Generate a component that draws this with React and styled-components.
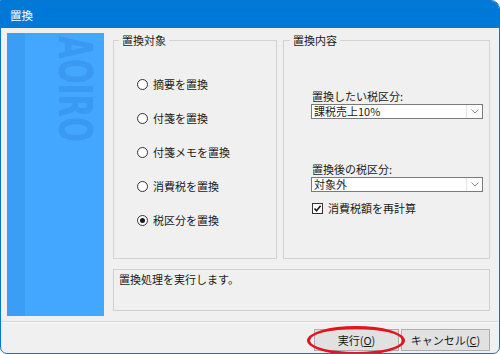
import React from 'react'
import styled, { createGlobalStyle } from 'styled-components'

const GlobalStyle = createGlobalStyle`
  html, body {
    margin: 0;
    padding: 0;
    background: #ffffff;
  }
  body {
    font-family: "Noto Sans CJK JP", "Noto Sans", sans-serif;
    font-size: 11px;
    color: #1a1a1a;
  }
`

const Window = styled.div`
  box-sizing: border-box;
  width: 500px;
  height: 354px;
  display: flex;
  flex-direction: column;
  background: #f0f0f0;
  border: 1px solid #0a76d4;
  border-radius: 0 9px 7px 7px;
  overflow: hidden;
`

const TitleBar = styled.div`
  height: 27px;
  flex: none;
  display: flex;
  align-items: center;
  padding-left: 9px;
  background: #0078d7;
  color: #ffffff;
  font-size: 11.5px;
`

const Main = styled.div`
  display: flex;
  padding: 5px 9px 0 6px;
  height: 283px;
`

const SidePanel = styled.div`
  width: 97px;
  flex: none;
  overflow: hidden;
  background: linear-gradient(to right, #3c9df7 0, #3c9df7 18px, #44a7ff 18px);
`

const Logo = styled.svg`
  display: block;
`

const Content = styled.div`
  flex: 1;
  margin-left: 9px;
  display: flex;
  flex-direction: column;
`

const Groups = styled.div`
  display: flex;
  gap: 6px;
  height: 226px;
`

const GroupBox = styled.fieldset`
  box-sizing: border-box;
  margin: 0;
  width: ${(props) => props.width || 'auto'};
  flex: ${(props) => (props.width ? 'none' : '1')};
  padding: ${(props) => props.pad};
  border: 1px solid #d3d3d3;
  display: flex;
  flex-direction: column;
`

const Legend = styled.legend`
  padding: 0 3px;
  margin-left: ${(props) => props.shift};
  line-height: 14px;
  font-size: 11px;
`

const RadioList = styled.div`
  display: flex;
  flex-direction: column;
  gap: 20px;
`

const RadioRow = styled.label`
  display: flex;
  align-items: center;
  height: 14px;
  line-height: 14px;
  gap: 5px;
`

const RadioCircle = styled.span`
  box-sizing: border-box;
  width: 11px;
  height: 11px;
  border-radius: 50%;
  border: 1px solid #333333;
  background: #ffffff;
  display: flex;
  align-items: center;
  justify-content: center;
  &::after {
    content: '';
    width: 5px;
    height: 5px;
    border-radius: 50%;
    background: ${(props) => (props.checked ? '#1a1a1a' : 'transparent')};
  }
`

const FieldLabel = styled.div`
  line-height: 14px;
  margin-top: ${(props) => props.top || '0'};
  margin-bottom: 1px;
`

const Select = styled.div`
  box-sizing: border-box;
  height: 15px;
  margin-left: -1px;
  display: flex;
  align-items: stretch;
  border: 1px solid #7a7a7a;
  background: #ffffff;
`

const SelectValue = styled.div`
  flex: 1;
  padding-left: 2px;
  line-height: 13px;
  white-space: nowrap;
`

const SelectArrow = styled.div`
  width: 15px;
  display: flex;
  align-items: center;
  justify-content: center;
  border-left: 1px solid #e3e3e3;
`

const CheckRow = styled.label`
  display: flex;
  align-items: center;
  gap: 5px;
  height: 14px;
  line-height: 14px;
  margin-top: 9px;
`

const CheckBox = styled.span`
  box-sizing: border-box;
  width: 11px;
  height: 11px;
  border: 1px solid #333333;
  background: #ffffff;
  display: flex;
  align-items: center;
  justify-content: center;
`

const MessageBox = styled.div`
  box-sizing: border-box;
  margin-top: 10px;
  height: 42px;
  padding: 2px 5px;
  line-height: 14px;
  border: 1px solid #cfcfcf;
`

const Separator = styled.div`
  margin-top: 5px;
  height: 1px;
  background: #d6d6d6;
  border-bottom: 1px solid #fafafa;
`

const Footer = styled.div`
  display: flex;
  justify-content: flex-end;
  gap: 2px;
  padding: 6px 9px 0 0;
`

const ButtonSlot = styled.div`
  position: relative;
`

const Button = styled.button`
  box-sizing: border-box;
  width: ${(props) => props.width};
  height: 22px;
  padding: 0;
  font-family: inherit;
  font-size: 11px;
  color: #1a1a1a;
  background: #e1e1e1;
  border: 1px solid #adadad;
  u {
    text-decoration: underline;
  }
`

const Highlight = styled.span`
  position: absolute;
  left: -7px;
  top: -3px;
  width: 98px;
  height: 29px;
  box-sizing: border-box;
  border: 3px solid #e3141b;
  border-radius: 50%;
  pointer-events: none;
`

const targets = ['摘要を置換', '付箋を置換', '付箋メモを置換', '消費税を置換', '税区分を置換']

const Chevron = () => (
  <svg width="8" height="5" viewBox="0 0 8 5">
    <path d="M0.5 0.5 L4 4 L7.5 0.5" fill="none" stroke="#8a8a8a" strokeWidth="1" />
  </svg>
)

const App = () => (
  <>
    <GlobalStyle />
    <Window>
      <TitleBar>置換</TitleBar>
      <Main>
        <SidePanel>
          <Logo width="97" height="283" viewBox="0 0 97 283">
            <text
              transform="translate(52 3) rotate(90)"
              x="0"
              y="0"
              fontFamily="'DejaVu Sans', sans-serif"
              fontWeight="bold"
              fontSize="47"
              textLength="106"
              lengthAdjust="spacingAndGlyphs"
              fill="#3a99f3"
            >
              AOIRO
            </text>
          </Logo>
        </SidePanel>
        <Content>
          <Groups>
            <GroupBox width="164px" pad="30px 8px 0 23px">
              <Legend shift="-18px">置換対象</Legend>
              <RadioList>
                {targets.map((t, i) => (
                  <RadioRow key={t}>
                    <RadioCircle checked={i === targets.length - 1} />
                    {t}
                  </RadioRow>
                ))}
              </RadioList>
            </GroupBox>
            <GroupBox pad="42px 6px 0 28px">
              <Legend shift="-22px">置換内容</Legend>
              <FieldLabel>置換したい税区分:</FieldLabel>
              <Select>
                <SelectValue>課税売上10%</SelectValue>
                <SelectArrow>
                  <Chevron />
                </SelectArrow>
              </Select>
              <FieldLabel top="43px">置換後の税区分:</FieldLabel>
              <Select>
                <SelectValue>対象外</SelectValue>
                <SelectArrow>
                  <Chevron />
                </SelectArrow>
              </Select>
              <CheckRow>
                <CheckBox>
                  <svg width="9" height="9" viewBox="0 0 9 9">
                    <path d="M1.5 4.5 L3.5 6.8 L7.6 1.8" fill="none" stroke="#1a1a1a" strokeWidth="1.6" />
                  </svg>
                </CheckBox>
                消費税額を再計算
              </CheckRow>
            </GroupBox>
          </Groups>
          <MessageBox>置換処理を実行します。</MessageBox>
        </Content>
      </Main>
      <Separator />
      <Footer>
        <ButtonSlot>
          <Button width="85px">
            実行(<u>O</u>)
          </Button>
          <Highlight />
        </ButtonSlot>
        <Button width="89px">
          キャンセル(<u>C</u>)
        </Button>
      </Footer>
    </Window>
  </>
)

export default App
